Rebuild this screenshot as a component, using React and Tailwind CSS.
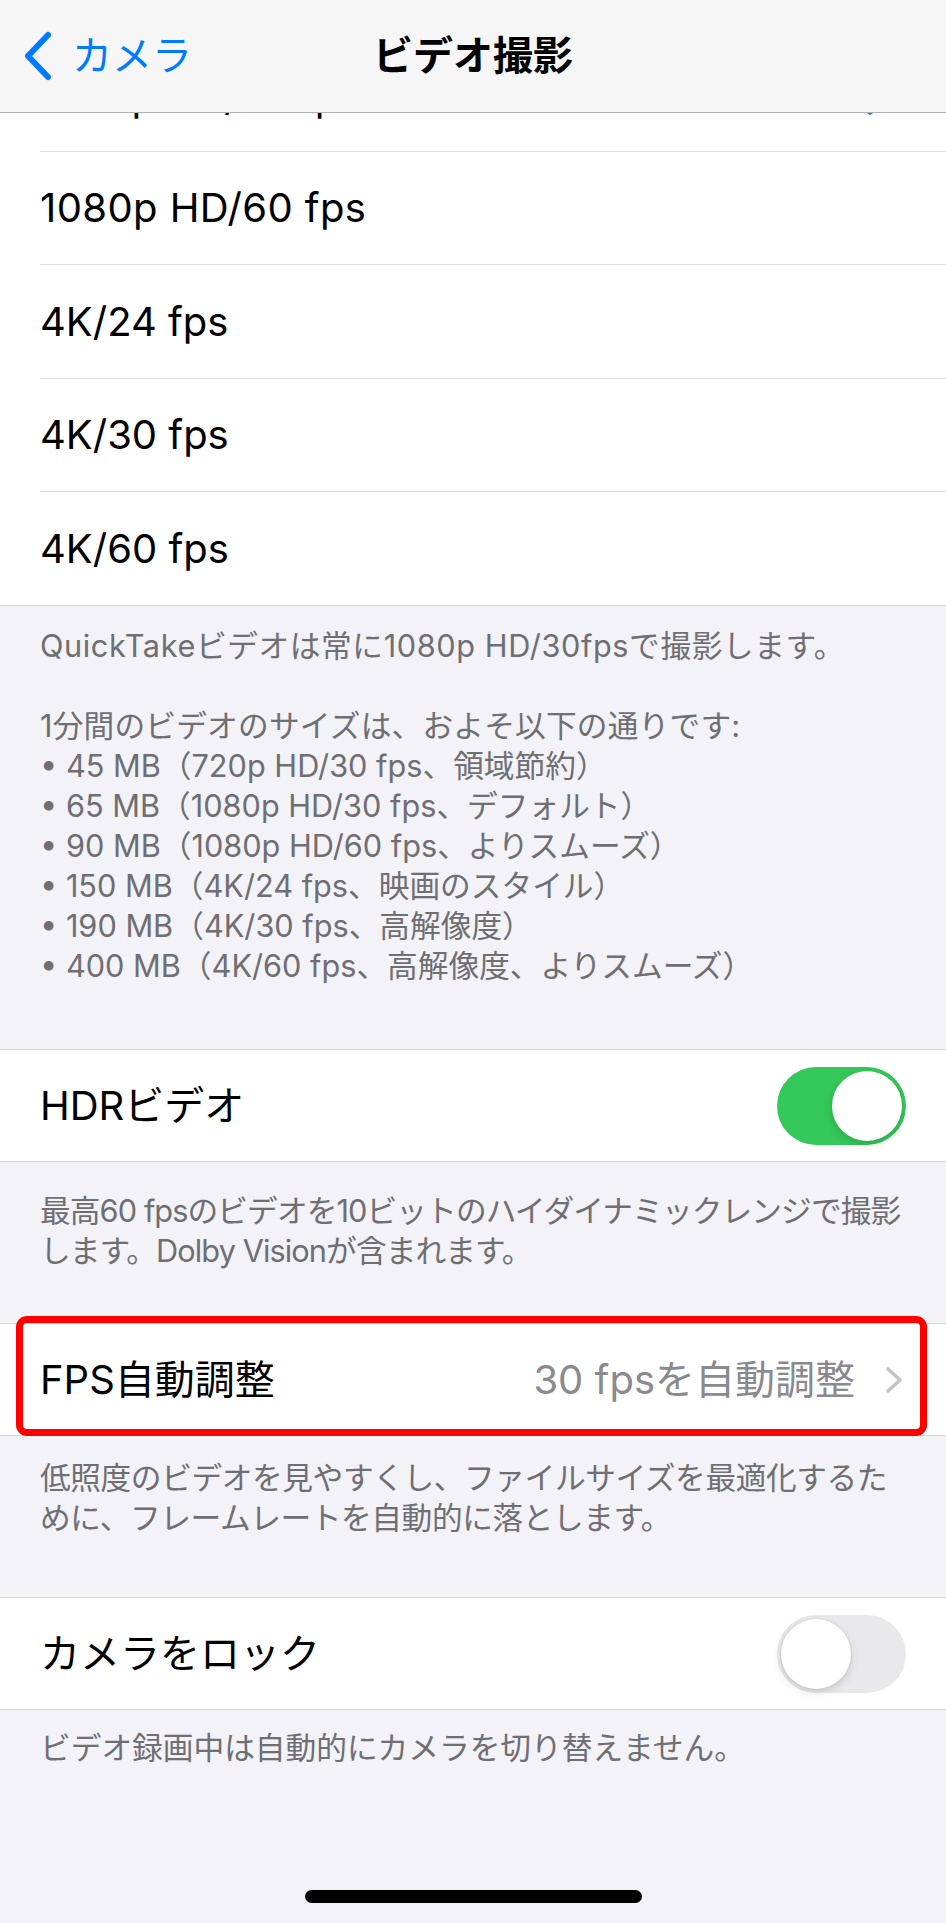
import React from "react";

function Check() {
  return (
    <svg width="38" height="36" viewBox="0 0 38 36" fill="none">
      <path d="M4 19 L14 31 L34 4" stroke="#007aff" strokeWidth="5.5" strokeLinecap="round" strokeLinejoin="round" />
    </svg>
  );
}

function Toggle({ on }) {
  if (on) {
    return (
      <div className="w-[129px] h-[78px] rounded-full bg-[#34c759] p-[4px] flex justify-end shrink-0">
        <div className="w-[70px] h-[70px] rounded-full bg-white shadow-[0_3px_8px_rgba(0,0,0,0.15)]" />
      </div>
    );
  }
  return (
    <div className="w-[129px] h-[78px] rounded-full bg-[#e9e9eb] p-[4px] flex justify-start shrink-0">
      <div className="w-[70px] h-[70px] rounded-full bg-white shadow-[0_3px_8px_rgba(0,0,0,0.15),0_0_0_1px_rgba(0,0,0,0.04)]" />
    </div>
  );
}

function Chevron() {
  return (
    <svg width="18" height="28" viewBox="0 0 18 28" fill="none">
      <path d="M3 3 L15 14 L3 25" stroke="#c4c4c7" strokeWidth="3.6" strokeLinecap="round" strokeLinejoin="round" />
    </svg>
  );
}

export default function App() {
  return (
    <div className="relative w-[946px] min-h-[1923px] overflow-hidden bg-[#f2f2f7] text-black font-[family-name:Inter,'Noto_Sans_CJK_JP',sans-serif]">
      {/* Navigation bar (overlays scrolled content) */}
      <header className="absolute top-0 inset-x-0 z-10 h-[113px] bg-[#f6f6f6] border-b border-[#b2b2b4] grid grid-cols-[1fr_auto_1fr] items-center">
        <div className="flex items-center pl-[22px] text-[#007aff]">
          <svg width="31" height="50" viewBox="0 0 31 50" fill="none">
            <path d="M26 4 L6 25 L26 46" stroke="#007aff" strokeWidth="6" strokeLinecap="round" strokeLinejoin="round" />
          </svg>
          <span className="ml-[19px] text-[40px] leading-none">カメラ</span>
        </div>
        <div className="text-[40px] leading-none font-bold">ビデオ撮影</div>
        <div />
      </header>

      <main className="pt-[38px]">
        {/* Section 1: resolutions */}
        <section className="bg-white border-b border-[#d6d6da]">
          <div className="pl-[40px]">
            <div className="h-[114px] flex items-center justify-between pr-[52px] border-b border-[#dcdce0] text-[40px] leading-none">
              <span className="leading-[28px] mt-[4px]">1080p HD/30 fps</span>
              <div className="mt-[8px]">
                <Check />
              </div>
            </div>
          </div>
          <div className="pl-[40px]">
            <div className="h-[113px] flex items-center border-b border-[#dcdce0] text-[40px] leading-none">
              <span className="tracking-[0.4px]">1080p HD/60 fps</span>
            </div>
          </div>
          <div className="pl-[40px]">
            <div className="h-[114px] flex items-center border-b border-[#dcdce0] text-[40px] leading-none">
              <span>4K/24 fps</span>
            </div>
          </div>
          <div className="pl-[40px]">
            <div className="h-[113px] flex items-center border-b border-[#dcdce0] text-[40px] leading-none">
              <span>4K/30 fps</span>
            </div>
          </div>
          <div className="pl-[40px]">
            <div className="h-[113px] flex items-center text-[40px] leading-none">
              <span>4K/60 fps</span>
            </div>
          </div>
        </section>

        <div className="px-[40px] pt-[20px] pb-[63px] text-[30.7px] leading-[40px] text-[#6e6e73] whitespace-nowrap">
          <div className="tracking-[0.6px]">QuickTakeビデオは常に1080p HD/30fpsで撮影します。</div>
          <div className="h-[40px]" />
          <div className="tracking-[0.2px]">1分間のビデオのサイズは、およそ以下の通りです:</div>
          <div>• 45 MB（720p HD/30 fps、領域節約）</div>
          <div>• 65 MB（1080p HD/30 fps、デフォルト）</div>
          <div>• 90 MB（1080p HD/60 fps、よりスムーズ）</div>
          <div>• 150 MB（4K/24 fps、映画のスタイル）</div>
          <div>• 190 MB（4K/30 fps、高解像度）</div>
          <div>• 400 MB（4K/60 fps、高解像度、よりスムーズ）</div>
        </div>

        {/* HDR */}
        <section className="bg-white border-y border-[#d6d6da]">
          <div className="h-[111px] flex items-center justify-between pl-[40px] pr-[40px] text-[40px] leading-none">
            <span>HDRビデオ</span>
            <Toggle on />
          </div>
        </section>
        <div className="px-[40px] pt-[29px] pb-[52px] text-[30.7px] leading-[40px] text-[#6e6e73] whitespace-nowrap tracking-[-0.9px]">
          最高60 fpsのビデオを10ビットのハイダイナミックレンジで撮影
          <br />
          します。Dolby Visionが含まれます。
        </div>

        {/* FPS auto */}
        <section className="relative bg-white border-y border-[#d6d6da]">
          <div className="h-[111px] flex items-center justify-between pl-[40px] pr-[43px] text-[40px] leading-none">
            <span>FPS自動調整</span>
            <div className="flex items-center gap-[30px]">
              <span className="text-[#8a8a8e]">30 fpsを自動調整</span>
              <Chevron />
            </div>
          </div>
          <div className="pointer-events-none absolute left-[16px] right-[19px] top-[-8px] bottom-[-1px] border-[7px] border-[#ff0000] rounded-[11px]" />
        </section>
        <div className="px-[40px] pt-[22px] pb-[59px] text-[30.7px] leading-[40px] text-[#6e6e73] whitespace-nowrap tracking-[-0.4px]">
          低照度のビデオを見やすくし、ファイルサイズを最適化するた
          <br />
          めに、フレームレートを自動的に落とします。
        </div>

        {/* Camera lock */}
        <section className="bg-white border-y border-[#d6d6da]">
          <div className="h-[111px] flex items-center justify-between pl-[40px] pr-[40px] text-[40px] leading-none">
            <span>カメラをロック</span>
            <Toggle on={false} />
          </div>
        </section>
        <div className="px-[40px] pt-[18px] text-[30.7px] leading-[40px] text-[#6e6e73] whitespace-nowrap">
          ビデオ録画中は自動的にカメラを切り替えません。
        </div>

        <div className="flex justify-center pt-[122px] pb-[20px]">
          <div className="w-[337px] h-[13px] rounded-full bg-black" />
        </div>
      </main>
    </div>
  );
}
